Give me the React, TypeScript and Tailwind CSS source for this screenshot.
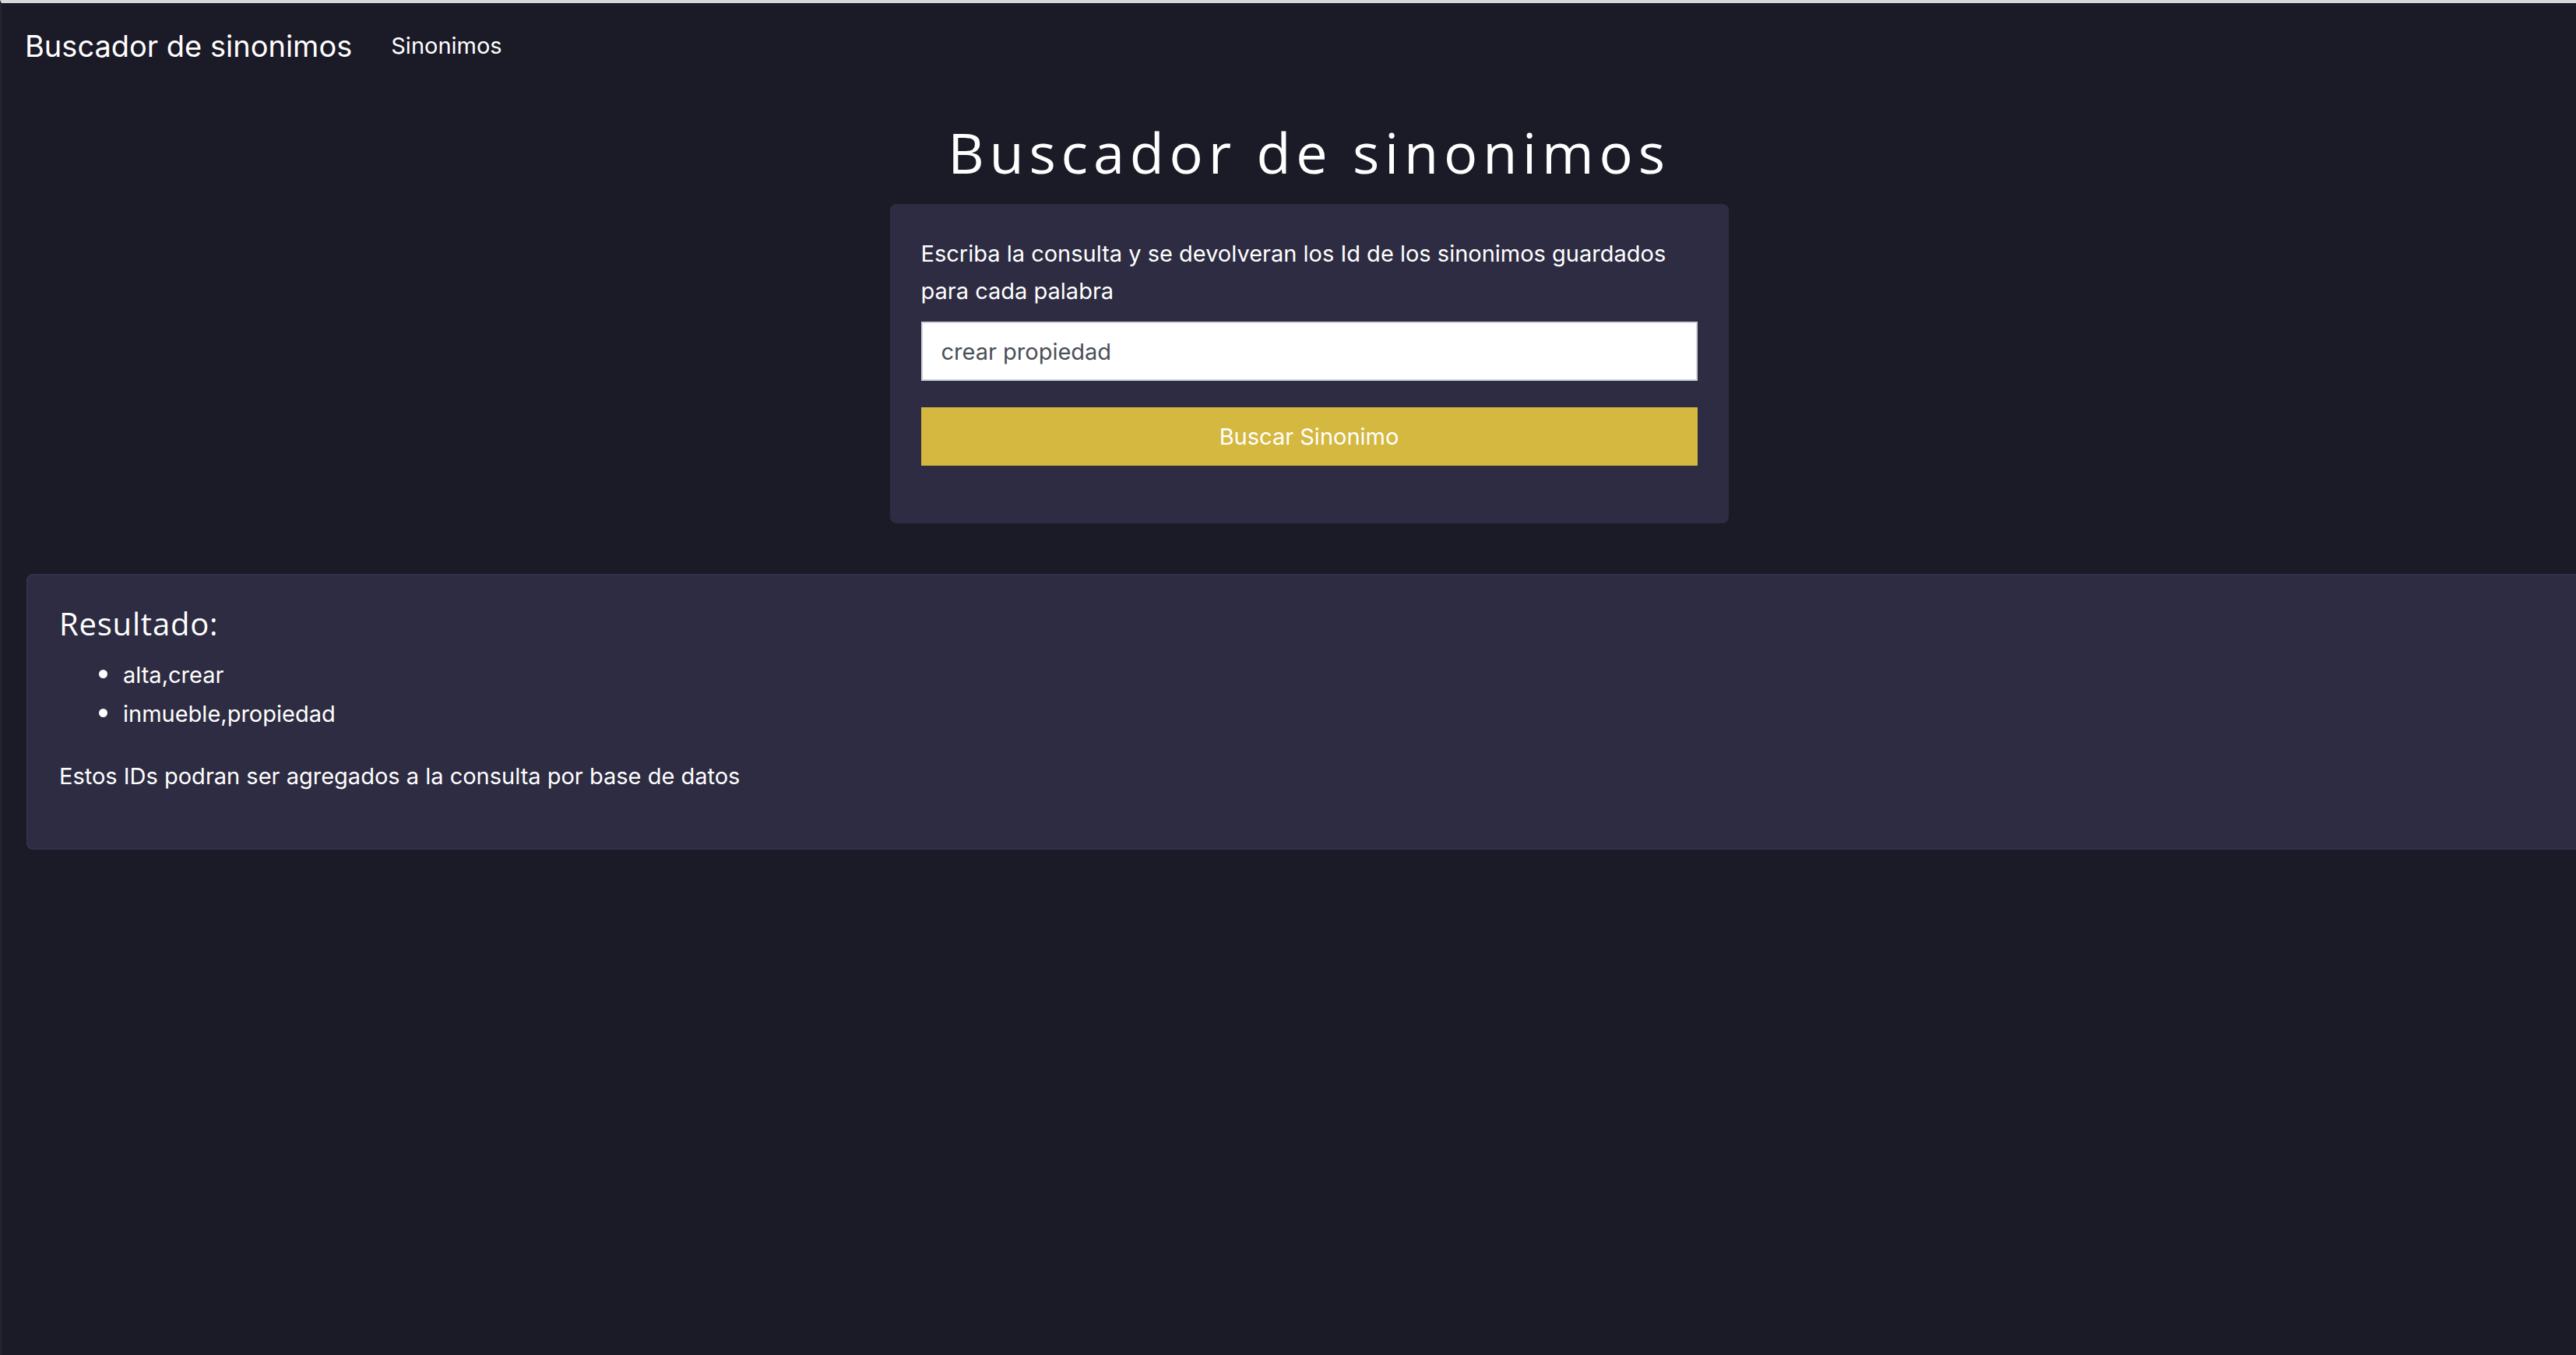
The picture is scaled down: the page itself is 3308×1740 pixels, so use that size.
import React from 'react';

const body = { fontFamily: 'Inter, "Liberation Sans", sans-serif' };
const display = { fontFamily: '"Open Sans", Inter, sans-serif' };

const App: React.FC = () => {
  const results = ['alta,crear', 'inmueble,propiedad'];

  return (
    <div
      className="min-h-[1740px] w-[3308px] overflow-hidden bg-[#1b1a27] border-t-4 border-t-[#d8d8dc] border-l-2 border-l-[#262433] text-white"
      style={body}
    >
      {/* Navbar */}
      <nav className="flex items-center h-[110px] px-[30px]">
        <span className="text-[38px] mr-[50px]">Buscador de sinonimos</span>
        <a className="text-[29px]">Sinonimos</a>
      </nav>

      {/* Search form */}
      <div className="flex flex-col items-center pl-[52px]">
        <h1 className="text-[72px] tracking-[6.8px] leading-[86px] h-[86px] mt-[38px] mb-[24px]" style={display}>
          Buscador de sinonimos
        </h1>
        <div className="w-[1077px] bg-[#2e2c42] rounded-[8px] p-[40px] pb-[74px]">
          <p className="text-[29px] leading-[48px] mb-[15px]">
            Escriba la consulta y se devolveran los Id de los sinonimos guardados para cada palabra
          </p>
          <input
            defaultValue="crear propiedad"
            className="block w-full h-[76px] bg-white border-2 border-[#ced4da] px-[24px] text-[29px] text-[#495057] outline-none"
            style={body}
          />
          <button
            className="block w-full h-[75px] mt-[34px] bg-[#d4b840] text-white text-[29px]"
            style={body}
          >
            Buscar Sinonimo
          </button>
        </div>
      </div>

      {/* Results */}
      <div className="ml-[32px] mt-[65px] w-[3400px] bg-[#2e2c42] border-2 border-[#34324a] rounded-[8px] pt-[38px] px-[40px] pb-[68px]">
        <h5 className="text-[40px] tracking-[0.8px] leading-[48px] mb-[16px]" style={display}>
          Resultado:
        </h5>
        <ul className="list-disc pl-[80px] mb-[32px] text-[29px] leading-[48px] marker:text-[34px]">
          {results.map((r) => (
            <li key={r} className="pl-[2px]">{r}</li>
          ))}
        </ul>
        <p className="text-[29px] leading-[48px]">Estos IDs podran ser agregados a la consulta por base de datos</p>
      </div>
    </div>
  );
};

export default App;
